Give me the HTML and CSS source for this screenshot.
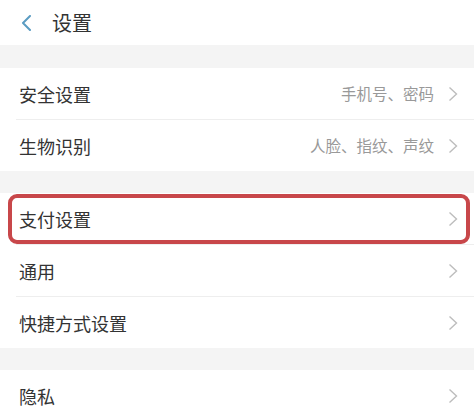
FILE: index.html
```html
<!DOCTYPE html>
<html lang="zh">
<head>
<meta charset="utf-8">
<link rel="stylesheet" href="styles.css">
</head>
<body>
<div class="page">
  <header class="topbar">
    <svg class="back" width="12" height="16" viewBox="0 0 12 16"><polyline points="10,1 3,8 10,15" fill="none" stroke="#5b9cc2" stroke-width="2" stroke-linecap="round" stroke-linejoin="round"/></svg>
    <span class="title">设置</span>
  </header>
  <div class="gap"></div>
  <section class="group">
    <div class="row"><span class="label">安全设置</span><span class="value">手机号、密码</span><svg class="chev" width="10" height="16" viewBox="0 0 10 16"><polyline points="1.5,1.5 8.5,8 1.5,14.5" fill="none" stroke="#bdbdbd" stroke-width="1.4"/></svg></div>
    <div class="row"><span class="label">生物识别</span><span class="value">人脸、指纹、声纹</span><svg class="chev" width="10" height="16" viewBox="0 0 10 16"><polyline points="1.5,1.5 8.5,8 1.5,14.5" fill="none" stroke="#bdbdbd" stroke-width="1.4"/></svg></div>
  </section>
  <div class="gap"></div>
  <section class="group">
    <div class="row highlighted"><span class="label">支付设置</span><span class="value"></span><svg class="chev" width="10" height="16" viewBox="0 0 10 16"><polyline points="1.5,1.5 8.5,8 1.5,14.5" fill="none" stroke="#bdbdbd" stroke-width="1.4"/></svg><span class="mark"></span></div>
    <div class="row"><span class="label">通用</span><span class="value"></span><svg class="chev" width="10" height="16" viewBox="0 0 10 16"><polyline points="1.5,1.5 8.5,8 1.5,14.5" fill="none" stroke="#bdbdbd" stroke-width="1.4"/></svg></div>
    <div class="row"><span class="label">快捷方式设置</span><span class="value"></span><svg class="chev" width="10" height="16" viewBox="0 0 10 16"><polyline points="1.5,1.5 8.5,8 1.5,14.5" fill="none" stroke="#bdbdbd" stroke-width="1.4"/></svg></div>
  </section>
  <div class="gap"></div>
  <section class="group">
    <div class="row"><span class="label">隐私</span><span class="value"></span><svg class="chev" width="10" height="16" viewBox="0 0 10 16"><polyline points="1.5,1.5 8.5,8 1.5,14.5" fill="none" stroke="#bdbdbd" stroke-width="1.4"/></svg></div>
  </section>
</div>
</body>
</html>
```

FILE: styles.css
```css
html, body {
  margin: 0;
  padding: 0;
  background: #f4f4f4;
}
body {
  font-family: "Noto Sans CJK SC", "Noto Sans", sans-serif;
  color: #333;
  overflow: hidden;
}
.page {
  width: 474px;
  display: flex;
  flex-direction: column;
}
.topbar {
  height: 45px;
  background: #fff;
  display: flex;
  align-items: center;
  padding-left: 20px;
  gap: 20px;
}
.back {
  display: block;
}
.title {
  font-size: 20px;
  color: #333;
  line-height: 1;
}
.gap {
  height: 22px;
  background: #f4f4f4;
}
.topbar + .gap {
  height: 23px;
}
.group {
  background: #fff;
  display: flex;
  flex-direction: column;
}
.row {
  position: relative;
  height: 51px;
  display: flex;
  align-items: center;
  padding: 0 16px 0 19px;
  background: #fff;
}
.row + .row {
  padding-top: 1px;
  background-image: linear-gradient(#eeeeee, #eeeeee);
  background-size: calc(100% - 16px) 1px;
  background-position: right top;
  background-repeat: no-repeat;
}
.label {
  font-size: 18px;
  color: #333;
  flex: 1;
  line-height: 1;
}
.value {
  font-size: 15.5px;
  color: #999;
  line-height: 1;
  margin-right: 14px;
}
.chev {
  display: block;
}
.mark {
  position: absolute;
  left: 8px;
  right: 4px;
  top: 1px;
  bottom: 0;
  border: 4px solid #c8474a;
  border-radius: 9px;
  pointer-events: none;
}
```
